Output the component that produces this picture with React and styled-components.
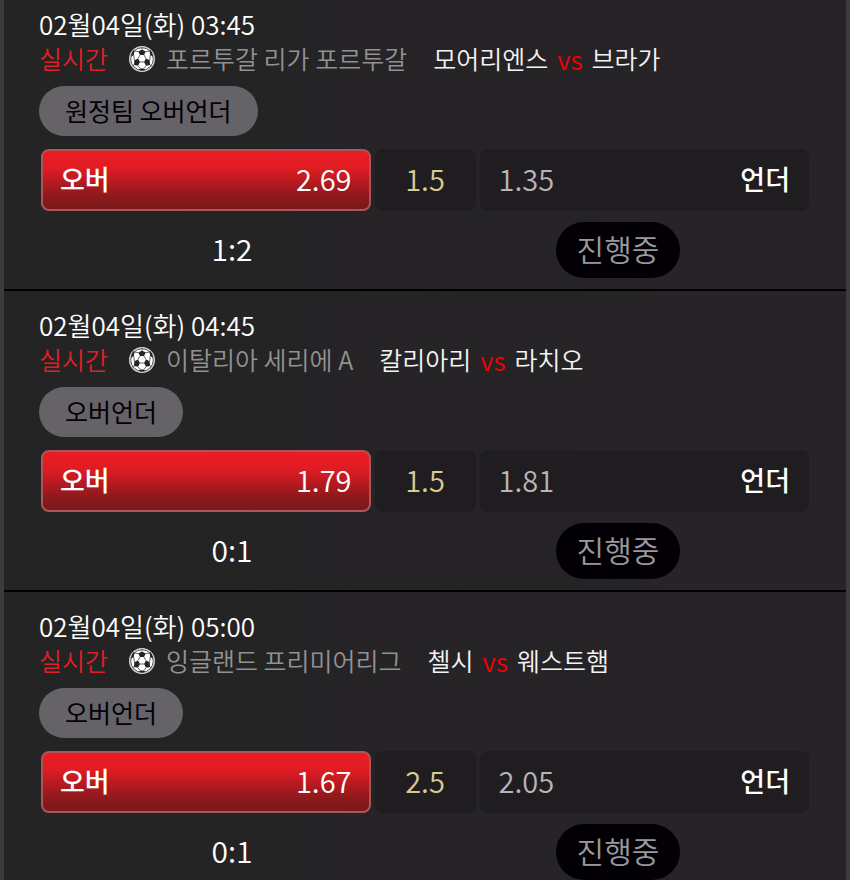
import React, { useState } from 'react';
import styled, { createGlobalStyle, css } from 'styled-components';

const GlobalStyle = createGlobalStyle`
  * {
    box-sizing: border-box;
  }
  body {
    margin: 0;
    background: #252426;
    font-family: 'Noto Sans CJK KR', 'Noto Sans', sans-serif;
    font-weight: 350;
  }
`;

const MatchList = styled.ul`
  margin: 0;
  padding: 0;
  list-style: none;
  border: solid #3b3b3c;
  border-width: 0 4px;
  background: linear-gradient(to right, #242424 20%, #272328 80%);
`;

const Match = styled.li`
  padding: 19px 35px 11px;
  border-bottom: 2px solid #000;
  &:first-child {
    padding-top: 9px;
  }
  &:last-child {
    padding-bottom: 0;
    border-bottom: 0;
  }
`;

const Kickoff = styled.time`
  display: block;
  margin-bottom: 3px;
  font-size: 26px;
  line-height: 30px;
  color: #fff;
`;

const Info = styled.div`
  display: flex;
  align-items: center;
  font-size: 25px;
  line-height: 33px;
  white-space: nowrap;
`;

const Live = styled.span`
  margin-right: 20px;
  color: #dd2027;
`;

const League = styled.span`
  margin: 0 26px 0 10px;
  color: #929292;
`;

const Teams = styled.span`
  display: flex;
  gap: 9px;
  color: #f4f4f4;
`;

const Versus = styled.span`
  font-size: 26px;
  color: #f40000;
`;

const Market = styled.div`
  display: flex;
  width: fit-content;
  height: 50px;
  margin-top: 11px;
  padding: 0 26px 3px;
  align-items: center;
  border-radius: 25px;
  background: #656367;
  color: #040008;
  font-size: 25px;
  font-weight: 400;
`;

const OddsRow = styled.div`
  display: grid;
  grid-template-columns: 1fr 101px 1fr;
  gap: 4px;
  margin-top: 13px;
  padding: 0 2px;
`;

const cell = css`
  display: flex;
  height: 62px;
  align-items: center;
  border: 2px solid transparent;
  border-radius: 8px;
  background: #1f1d20;
  font-family: inherit;
  font-size: 29px;
  font-weight: 350;
`;

const Pick = styled.button`
  ${cell};
  justify-content: space-between;
  padding: 0 17px 4px;
  color: #b7b4ba;
  cursor: pointer;
  ${props =>
    props.$selected &&
    css`
      border-color: #a9555a;
      background: linear-gradient(#ed1c24, #e01c23 30%, #8f191d 75%, #74191b) border-box;
      color: #fff;
    `}
`;

const PickName = styled.span`
  font-size: 27px;
  font-weight: 500;
  color: #fff;
`;

const Line = styled.div`
  ${cell};
  justify-content: center;
  padding-bottom: 4px;
  color: #d8ca92;
`;

const Footer = styled.div`
  display: grid;
  grid-template-columns: 1fr 1fr;
  justify-items: center;
  align-items: center;
  margin-top: 11px;
`;

const Score = styled.span`
  padding-bottom: 4px;
  font-size: 30px;
  line-height: 52px;
  color: #fff;
`;

const Status = styled.span`
  padding: 0 21px 4px;
  border-radius: 28px;
  background: #020004;
  color: #9a989c;
  font-size: 30px;
  line-height: 52px;
`;

const SoccerBall = () => (
  <svg width="28" height="28" viewBox="0 0 28 28" aria-hidden="true">
    <circle cx="14" cy="14" r="12.4" fill="#fff" stroke="#cfcfcf" strokeWidth="1.2" />
    <circle cx="14" cy="14" r="11.3" fill="#fff" stroke="#242424" strokeWidth="0.8" />
    <g fill="#242424">
      <path d="m12 10-1.8-3.4L14 4.4l3.8 2.2L16 10z" />
      <path d="m10 13.5 2 3.5-2 3.8-4-.9.3-4.6z" />
      <path d="m18 13.5-2 3.5 2 3.8 4-.9-.3-4.6z" />
      <path d="M3 11.8 5.8 10l.7-3.9-1-1.1Q3.2 7.6 3 11.8z" />
      <path d="M25 11.8 22.2 10l-.7-3.9 1-1.1q2.3 2.6 2.5 6.8z" />
      <path d="m11 24.9 1-1.4h4l1 1.4q-3 1-6 0z" />
    </g>
    <g fill="none" stroke="#242424" strokeWidth="0.7">
      <path d="m12 10-2 3.5M16 10l2 3.5M12 17h4" />
      <path d="M10.2 6.6 6.5 6.1M17.8 6.6l3.7-.5M14 4.4V2.8" />
      <path d="M5.8 10l.5 5.3M22.2 10l-.5 5.3M10 20.8l2 2.7M18 20.8l-2 2.7" />
      <path d="m6 19.9-1.5 1M22 19.9l1.5 1" />
    </g>
  </svg>
);

const matches = [
  {
    id: 1,
    time: '03:45',
    league: '포르투갈 리가 포르투갈',
    home: '모어리엔스',
    away: '브라가',
    market: '원정팀 오버언더',
    over: '2.69',
    line: '1.5',
    under: '1.35',
    score: '1:2',
  },
  {
    id: 2,
    time: '04:45',
    league: '이탈리아 세리에 A',
    home: '칼리아리',
    away: '라치오',
    market: '오버언더',
    over: '1.79',
    line: '1.5',
    under: '1.81',
    score: '0:1',
  },
  {
    id: 3,
    time: '05:00',
    league: '잉글랜드 프리미어리그',
    home: '첼시',
    away: '웨스트햄',
    market: '오버언더',
    over: '1.67',
    line: '2.5',
    under: '2.05',
    score: '0:1',
  },
];

const MatchItem = ({ match }) => {
  const [pick, setPick] = useState('over');

  return (
    <Match>
      <Kickoff>02월04일(화) {match.time}</Kickoff>
      <Info>
        <Live>실시간</Live>
        <SoccerBall />
        <League>{match.league}</League>
        <Teams>
          <span>{match.home}</span>
          <Versus>vs</Versus>
          <span>{match.away}</span>
        </Teams>
      </Info>
      <Market>{match.market}</Market>
      <OddsRow>
        <Pick type="button" $selected={pick === 'over'} onClick={() => setPick('over')}>
          <PickName>오버</PickName>
          <span>{match.over}</span>
        </Pick>
        <Line>{match.line}</Line>
        <Pick type="button" $selected={pick === 'under'} onClick={() => setPick('under')}>
          <span>{match.under}</span>
          <PickName>언더</PickName>
        </Pick>
      </OddsRow>
      <Footer>
        <Score>{match.score}</Score>
        <Status>진행중</Status>
      </Footer>
    </Match>
  );
};

export default function App() {
  return (
    <>
      <GlobalStyle />
      <MatchList>
        {matches.map(match => (
          <MatchItem key={match.id} match={match} />
        ))}
      </MatchList>
    </>
  );
}
